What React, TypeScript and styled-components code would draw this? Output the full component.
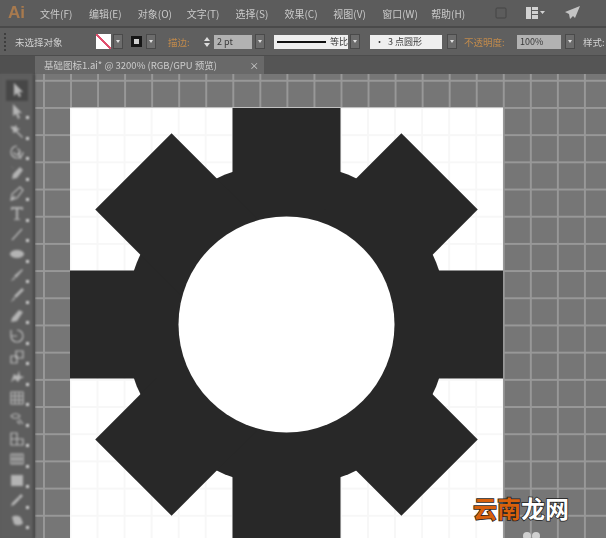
import React from 'react'
import styled, {createGlobalStyle} from "styled-components";

const Global = createGlobalStyle`
    html, body {
        margin: 0;
        padding: 0;
        background: #5a5a5a;
        overflow: hidden;
    }
    body {
        font-family: "Noto Sans CJK SC", "Liberation Sans", sans-serif;
    }
`

const Page = styled.div`
    position: relative;
    width: 606px;
    height: 538px;
    display: flex;
    flex-direction: column;
    overflow: hidden;
`

const MenuBar = styled.div`
    height: 26px;
    flex: none;
    display: flex;
    align-items: center;
    background: #5c5c5c;
    border-bottom: 2px solid #4a4a4a;
    filter: blur(0.5px);
`
const Logo = styled.div`
    width: 40px;
    padding-left: 8px;
    box-sizing: border-box;
    font: bold 17px "Liberation Sans", sans-serif;
    color: #a87a4e;
`
const MenuItem = styled.span`
    width: 48.9px;
    flex: none;
    font-size: 10px;
    color: #cacaca;
    white-space: nowrap;
`
const MenuIcons = styled.div`
    display: flex;
    align-items: center;
    gap: 19px;
    margin-left: 15px;
`

const ControlBar = styled.div`
    height: 28px;
    flex: none;
    display: flex;
    align-items: center;
    background: #5f5f5f;
    border-bottom: 1px solid #4c4c4c;
    padding-left: 4px;
    box-sizing: border-box;
    font-size: 9.5px;
    color: #d0d0d0;
    filter: blur(0.5px);
`
const Grip = styled.div`
    width: 3px;
    height: 18px;
    flex: none;
    margin-right: 6px;
    border-left: 2px dotted #3e3e3e;
`
const ControlLabel = styled.span<{$w: number; $ml?: number; $orange?: boolean}>`
    width: ${p => p.$w}px;
    margin-left: ${p => p.$ml || 0}px;
    flex: none;
    white-space: nowrap;
    color: ${p => p.$orange ? '#c08a4c' : '#d0d0d0'};
`
const Swatch = styled.div`
    width: 15px;
    height: 15px;
    flex: none;
    background: linear-gradient(135deg, #fff 0 44%, #e0506e 44% 56%, #fff 56%);
    transform: scaleX(-1);
`
const Arrow = styled.div<{$ml: number}>`
    width: 10px;
    height: 15px;
    flex: none;
    margin-left: ${p => p.$ml}px;
    background: #6c6c6c;
    border: 1px solid #4a4a4a;
    box-sizing: border-box;
    display: flex;
    align-items: center;
    justify-content: center;
    &::after {
        content: "";
        border: 2.5px solid transparent;
        border-top: 3px solid #e0e0e0;
        border-bottom: 0;
    }
`
const FillIcon = styled.div`
    width: 11px;
    height: 11px;
    flex: none;
    margin-left: 8px;
    border: 3px solid #161616;
    background: #d0d0d0;
    box-sizing: border-box;
`
const Stepper = styled.div`
    width: 10px;
    height: 15px;
    flex: none;
    margin-right: 2px;
    display: flex;
    flex-direction: column;
    align-items: center;
    justify-content: center;
    gap: 2px;
    &::before, &::after {
        content: "";
        border: 3px solid transparent;
    }
    &::before {
        border-bottom: 4px solid #dcdcdc;
        border-top: 0;
    }
    &::after {
        border-top: 4px solid #dcdcdc;
        border-bottom: 0;
    }
`
const Field = styled.div<{$w: number; $ml?: number; $bg: string}>`
    width: ${p => p.$w}px;
    height: 14px;
    flex: none;
    margin-left: ${p => p.$ml || 0}px;
    padding-left: 3px;
    box-sizing: border-box;
    display: flex;
    align-items: center;
    gap: 4px;
    background: ${p => p.$bg};
    color: #3a3a3a;
    font: 9px/14px "Noto Sans CJK SC", "Liberation Sans", sans-serif;
    white-space: nowrap;
`
const StrokeLine = styled.div`
    flex: 1;
    height: 2px;
    background: #111;
`

const TabRow = styled.div`
    height: 18px;
    flex: none;
    display: flex;
    background: #555555;
    filter: blur(0.5px);
`
const PanelGrip = styled.div`
    width: 35px;
    flex: none;
    background: #505050;
`
const Tab = styled.div`
    width: 229px;
    padding: 0 5px 0 9px;
    box-sizing: border-box;
    display: flex;
    justify-content: space-between;
    align-items: center;
    background: #696969;
    color: #cccccc;
    font-size: 9.5px;
    white-space: nowrap;
`

const Workspace = styled.div`
    flex: 1;
    min-height: 0;
    display: flex;
`
const ToolBar = styled.div`
    width: 35px;
    flex: none;
    box-sizing: border-box;
    padding-top: 6px;
    display: flex;
    flex-direction: column;
    align-items: center;
    background: #5e5e5e;
    border-right: 2px solid #474747;
    filter: blur(0.8px);
`
const Tool = styled.div<{$active?: boolean}>`
    position: relative;
    width: 22px;
    height: 20.5px;
    flex: none;
    display: flex;
    align-items: center;
    justify-content: center;
    background: ${p => p.$active ? '#474747' : 'transparent'};
    &::after {
        content: "";
        display: ${p => p.$active ? 'none' : 'block'};
        position: absolute;
        right: -1px;
        bottom: 2px;
        width: 3px;
        height: 3px;
        background: #d0d0d0;
    }
`

const Canvas = styled.div`
    flex: 1;
    min-width: 0;
    padding-left: 35px;
    padding-top: 34px;
    background-color: #767676;
    background-image:
        linear-gradient(#989898 0 1.5px, transparent 1.5px),
        linear-gradient(90deg, #989898 0 1.5px, transparent 1.5px);
    background-size: 27.05px 27.2px;
    background-position: 8px 5.8px;
`
const Artboard = styled.div`
    width: 433px;
    height: 433px;
    background-color: #fff;
    background-image:
        linear-gradient(#f7f7f7 0 2px, transparent 2px),
        linear-gradient(90deg, #f7f7f7 0 2px, transparent 2px);
    background-size: 27.05px 27.2px;
    background-position: -0.5px 26.2px;
    box-shadow: 0 -1px 0 #c0c0c0;
`

const Watermark = styled.div`
    position: absolute;
    left: 473px;
    top: 490px;
    font: bold 24px/36px "Noto Sans CJK SC", sans-serif;
    white-space: nowrap;
    color: #fff;
    -webkit-text-stroke: 1.5px #1c1c1c;
    paint-order: stroke fill;
`
const Orange = styled.span`
    color: #d8600c;
`
const Blob = styled.div`
    position: absolute;
    left: 523px;
    top: 532px;
    display: flex;
    gap: 1px;
    &::before, &::after {
        content: "";
        width: 8px;
        height: 8px;
        border-radius: 50%;
        background: #cfcfcf;
    }
`

const menus = ['文件(F)', '编辑(E)', '对象(O)', '文字(T)', '选择(S)', '效果(C)', '视图(V)', '窗口(W)', '帮助(H)']

const tools: {d: string; solid?: boolean}[] = [
    {d: 'M5 1v13l3-3 2 4 2-1-2-4h4z', solid: true},
    {d: 'M4 1l9 9-4 0 2 5-2 1-2-5-3 2z', solid: true},
    {d: 'M2 3l3 1 2-2 1 3 3 1-3 2 6 6-1 1-6-6-3 1 0-3-2-2z', solid: true},
    {d: 'M8 2a6 6 0 1 0 6 6M8 5a3 3 0 1 1-3 3M9 8l3 7'},
    {d: 'M2 2l3 3M11 3l3 3-6 8-5 1 1-5z', solid: true},
    {d: 'M11 2l3 3-6 8-6 2 1-6zM2 15l4-4'},
    {d: 'M2 2h12v3h-1l-1-1H9v10h2v1H5v-1h2V4H4L3 5H2z', solid: true},
    {d: 'M3 14L13 3'},
    {d: 'M8 4c4 0 7 2 7 4s-3 4-7 4-7-2-7-4 3-4 7-4z', solid: true},
    {d: 'M13 2l1 1-7 8-2-2zM5 10l1 2-4 2z', solid: true},
    {d: 'M13 1l2 2-8 8-2-2zM5 10l1 2-4 3z', solid: true},
    {d: 'M10 2l4 2-6 9-6 1 1-4z', solid: true},
    {d: 'M8 2a6 6 0 1 1-6 6M2 2v6h6'},
    {d: 'M7 2h7v7H7zM2 7h6v7H2z'},
    {d: 'M2 13l3-8 3 2 2-5 1 5 4 1-4 2-2 3-3-3z', solid: true},
    {d: 'M2 2h12v12H2zM2 6h12M2 10h12M6 2v12M10 2v12'},
    {d: 'M2 6a5 4 0 0 1 9 0 5 4 0 0 1-9 0zM10 9l4 5M8 11l3 3'},
    {d: 'M2 2h6v6H2zM8 8h6v6H8zM2 8h6v6H2z'},
    {d: 'M2 3h12v10H2zM5 3v10M8 3v10M11 3v10M2 8h12'},
    {d: 'M2 3h12v11H2z', solid: true},
    {d: 'M12 2l2 2-3 3-2-2zM9 5l2 2-6 6-3 1 1-3z', solid: true},
    {d: 'M3 4a5 3 0 0 1 9 1l2 5a5 3 0 0 1-9 1z', solid: true},
]

const Gear = () => (
    <svg width={433} height={433} viewBox="0 0 433 433" style={{display: 'block'}}>
        <g fill="#282828">
            <circle cx={216.5} cy={216.5} r={162}/>
            {[0, 45, 90, 135, 180, 225, 270, 315].map(angle => (
                <rect key={angle} x={162.500} y={0} width={108} height={120} transform={`rotate(${angle} 216.5 216.5)`}/>
            ))}
        </g>
        <circle cx={216.5} cy={216.5} r={108} fill="#fff"/>
    </svg>
)

const App: React.FC = () => {
    return (
        <Page>
            <Global/>
            <MenuBar>
                <Logo>Ai</Logo>
                {menus.map(item => <MenuItem key={item}>{item}</MenuItem>)}
                <MenuIcons>
                    <svg width={12} height={12} viewBox="0 0 12 12">
                        <rect x={1} y={1} width={10} height={10} rx={1} fill="#5c5c5c" stroke="#444"/>
                    </svg>
                    <svg width={20} height={12} viewBox="0 0 20 12">
                        <path d="M0 0h5v12H0zM6 0h6v3H6zM6 4h6v3H6zM6 8h6v4H6zM14 4h5l-2.500 3z" fill="#d2d2d2"/>
                    </svg>
                    <svg width={16} height={14} viewBox="0 0 16 14">
                        <path d="M15 0L0 6l4 2 1 5 3-3 2 2z" fill="#c4c4c4"/>
                    </svg>
                </MenuIcons>
            </MenuBar>
            <ControlBar>
                <Grip/>
                <ControlLabel $w={81}>未选择对象</ControlLabel>
                <Swatch/>
                <Arrow $ml={2}/>
                <FillIcon/>
                <Arrow $ml={4}/>
                <ControlLabel $w={34} $ml={12} $orange>描边:</ControlLabel>
                <Stepper/>
                <Field $w={38} $bg="#b2b2b2">2 pt</Field>
                <Arrow $ml={3}/>
                <Field $w={74} $ml={9} $bg="#efefef">
                    <StrokeLine/>等比
                </Field>
                <Arrow $ml={2}/>
                <Field $w={72} $ml={10} $bg="#efefef">&nbsp;•&nbsp; 3 点圆形</Field>
                <Arrow $ml={5}/>
                <ControlLabel $w={53} $ml={7} $orange>不透明度:</ControlLabel>
                <Field $w={44} $bg="#b2b2b2">100%</Field>
                <Arrow $ml={4}/>
                <ControlLabel $w={24} $ml={8}>样式:</ControlLabel>
            </ControlBar>
            <TabRow>
                <PanelGrip/>
                <Tab>
                    <span>基础图标1.ai* @ 3200% (RGB/GPU 预览)</span>
                    <span>×</span>
                </Tab>
            </TabRow>
            <Workspace>
                <ToolBar>
                    {tools.map((tool, index) => (
                        <Tool key={index} $active={index === 0}>
                            <svg width={16} height={16} viewBox="0 0 16 16">
                                <path
                                    d={tool.d}
                                    fill={tool.solid ? '#b4b4b4' : 'none'}
                                    stroke={tool.solid ? '#8a8a8a' : '#bcbcbc'}
                                    strokeWidth={tool.solid ? 0.5 : 1.2}
                                />
                            </svg>
                        </Tool>
                    ))}
                </ToolBar>
                <Canvas>
                    <Artboard>
                        <Gear/>
                    </Artboard>
                </Canvas>
            </Workspace>
            <Blob/>
            <Watermark><Orange>云南</Orange>龙网</Watermark>
        </Page>
    )
}

export default App;
